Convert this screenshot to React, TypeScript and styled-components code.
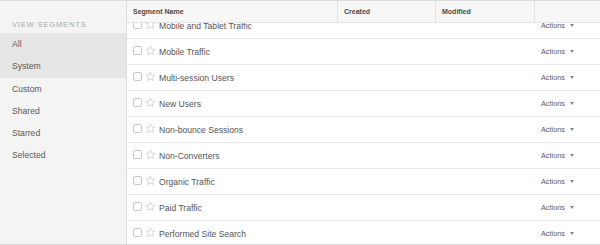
import React from 'react';
import styled, { createGlobalStyle } from 'styled-components';

const GlobalStyle = createGlobalStyle`
    html, body {
        margin: 0;
        padding: 0;
        background: #ffffff;
    }
    body {
        font-family: "Liberation Sans", Arial, sans-serif;
    }
`

const Pagina = styled.div`
    display: flex;
    width: 600px;
    height: 245px;
    border-top: 1px solid #dcdcdc;
    border-bottom: 1px solid #dcdcdc;
    box-sizing: border-box;
    overflow: hidden;
`

const BarraLateral = styled.aside`
    width: 127px;
    flex-shrink: 0;
    background-color: #f4f4f4;
    border-right: 1px solid #dedede;
    padding-top: 17px;
    box-sizing: border-box;
`

const TituloLateral = styled.div`
    font-size: 7.6px;
    color: #a8a8a8;
    letter-spacing: 0.8px;
    padding: 0 0 0 12px;
    height: 15px;
    line-height: 14px;
`

const ItemLateral = styled.div<{ $destacado?: boolean }>`
    height: 22.3px;
    line-height: 22px;
    padding-left: 12px;
    font-size: 8.6px;
    color: #5a5a5a;
    background-color: ${({ $destacado }) => ($destacado ? '#e6e6e6' : 'transparent')};
`

const Tabela = styled.section`
    flex: 1;
    display: flex;
    flex-direction: column;
    min-width: 0;
`

const colunas = '210px 98px 99px 1fr'

const Cabecalho = styled.div`
    display: grid;
    grid-template-columns: ${colunas};
    height: 21px;
    background-color: #f7f7f7;
    border-bottom: 1px solid #e4e4e4;
    flex-shrink: 0;
    position: relative;
    z-index: 1;
`

const CelulaCabecalho = styled.div<{ $divisor?: boolean }>`
    font-size: 7px;
    font-weight: 700;
    color: #4a4a4a;
    line-height: 22px;
    padding-left: 6px;
    border-left: ${({ $divisor }) => ($divisor ? '1px solid #e2e2e2' : 'none')};
`

const Corpo = styled.div`
    flex: 1;
    overflow: hidden;
`

const Lista = styled.div`
    margin-top: -10px;
`

const Linha = styled.div`
    display: grid;
    grid-template-columns: ${colunas};
    height: 26px;
    border-bottom: 1px solid #e8e8e8;
    box-sizing: border-box;
    align-items: center;
`

const CelulaNome = styled.div`
    display: flex;
    align-items: center;
    padding-left: 6px;
    font-size: 8.6px;
    color: #555555;
`

const Caixa = styled.span`
    width: 7px;
    height: 7px;
    border: 1px solid #c8c8c8;
    border-radius: 2px;
    background: #fff;
    margin-right: 3px;
    margin-top: -3px;
`

const Estrela = styled.svg`
    width: 11px;
    height: 11px;
    margin-right: 3px;
    margin-top: -2px;
`

const CelulaAcoes = styled.div`
    grid-column: 4;
    padding-left: 7px;
    font-size: 7.3px;
    color: #5a5a5a;
    display: flex;
    align-items: center;
    gap: 5px;
`

const Seta = styled.span`
    width: 0;
    height: 0;
    border-left: 2.5px solid transparent;
    border-right: 2.5px solid transparent;
    border-top: 3px solid #888;
`

const segmentos = [
    'Mobile and Tablet Traffic',
    'Mobile Traffic',
    'Multi-session Users',
    'New Users',
    'Non-bounce Sessions',
    'Non-Converters',
    'Organic Traffic',
    'Paid Traffic',
    'Performed Site Search',
    'Referral Traffic',
]

const filtros = ['All', 'System', 'Custom', 'Shared', 'Starred', 'Selected']

function IconeEstrela() {
    return (
        <Estrela viewBox="0 0 24 24">
            <path
                d="M12 2.5l2.9 6.1 6.6.8-4.9 4.6 1.3 6.6L12 17.3l-5.9 3.3 1.3-6.6-4.9-4.6 6.6-.8z"
                fill="none"
                stroke="#c2c2c2"
                strokeWidth="1.5"
                strokeLinejoin="round"
            />
        </Estrela>
    )
}

export default function App() {
    return (
        <>
            <GlobalStyle />
            <Pagina>
                <BarraLateral>
                    <TituloLateral>VIEW SEGMENTS</TituloLateral>
                    {filtros.map((f, i) => (
                        <ItemLateral key={f} $destacado={i < 2}>{f}</ItemLateral>
                    ))}
                </BarraLateral>
                <Tabela>
                    <Cabecalho>
                        <CelulaCabecalho>Segment Name</CelulaCabecalho>
                        <CelulaCabecalho $divisor>Created</CelulaCabecalho>
                        <CelulaCabecalho $divisor>Modified</CelulaCabecalho>
                        <CelulaCabecalho $divisor></CelulaCabecalho>
                    </Cabecalho>
                    <Corpo>
                        <Lista>
                            {segmentos.map((s) => (
                                <Linha key={s}>
                                    <CelulaNome>
                                        <Caixa />
                                        <IconeEstrela />
                                        {s}
                                    </CelulaNome>
                                    <CelulaAcoes>
                                        Actions <Seta />
                                    </CelulaAcoes>
                                </Linha>
                            ))}
                        </Lista>
                    </Corpo>
                </Tabela>
            </Pagina>
        </>
    )
}
